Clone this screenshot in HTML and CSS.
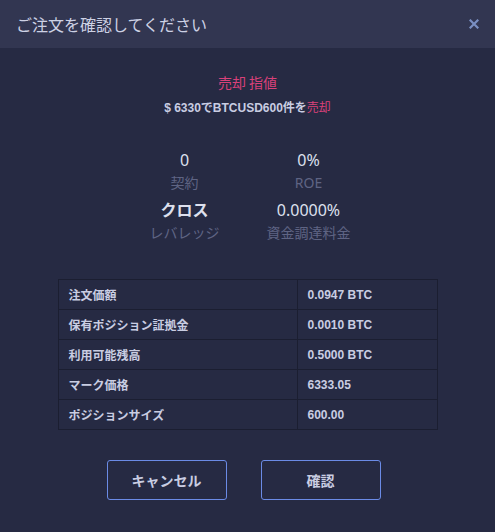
FILE: index.html
```html
<!DOCTYPE html>
<html lang="ja">
<head>
<meta charset="utf-8">
<link rel="stylesheet" href="styles.css">
</head>
<body>
<div class="dialog">
  <div class="header">
    <span class="title">ご注文を確認してください</span>
    <svg class="close" width="10" height="10" viewBox="0 0 10 10"><path d="M1.5 1.5 L8.5 8.5 M8.5 1.5 L1.5 8.5" stroke="#7a8fc2" stroke-width="2.2" stroke-linecap="square"/></svg>
  </div>
  <div class="body">
    <div class="kind">売却 指値</div>
    <div class="summary">$ 6330でBTCUSD600件を<span class="pink">売却</span></div>
    <div class="stats">
      <div class="stat"><div class="val">0</div><div class="lbl">契約</div></div>
      <div class="stat"><div class="val">0%</div><div class="lbl">ROE</div></div>
      <div class="stat"><div class="val">クロス</div><div class="lbl">レバレッジ</div></div>
      <div class="stat"><div class="val">0.0000%</div><div class="lbl">資金調達料金</div></div>
    </div>
    <table class="info">
      <tr><td>注文価額</td><td>0.0947 BTC</td></tr>
      <tr><td>保有ポジション証拠金</td><td>0.0010 BTC</td></tr>
      <tr><td>利用可能残高</td><td>0.5000 BTC</td></tr>
      <tr><td>マーク価格</td><td>6333.05</td></tr>
      <tr><td>ポジションサイズ</td><td>600.00</td></tr>
    </table>
    <div class="buttons">
      <button class="btn">キャンセル</button>
      <button class="btn">確認</button>
    </div>
  </div>
</div>
</body>
</html>
```
FILE: styles.css
```css
html, body {
  margin: 0;
  padding: 0;
  background: #262a43;
}
body {
  font-family: "Liberation Sans", "Noto Sans CJK JP", sans-serif;
  color: #c9cde2;
  width: 495px;
  height: 532px;
  overflow: hidden;
}
.dialog {
  width: 495px;
  height: 532px;
  display: flex;
  flex-direction: column;
}
.header {
  height: 48px;
  background: #323651;
  display: flex;
  align-items: center;
  justify-content: space-between;
  padding: 0 16px 0 16px;
  box-sizing: border-box;
}
.title {
  font-family: "Noto Sans CJK JP", sans-serif;
  font-size: 16px;
  color: #cdd1e4;
}
.close {
  display: block;
  margin-right: 0;
}
.body {
  display: flex;
  flex-direction: column;
  align-items: center;
  padding-top: 24px;
}
.kind {
  font-family: "Noto Sans CJK JP", sans-serif;
  font-size: 14px;
  color: #d9417a;
  line-height: 20px;
}
.summary {
  font-size: 12px;
  font-weight: bold;
  line-height: 18px;
  margin-top: 7px;
  color: #c9cde2;
}
.pink {
  color: #d9417a;
  font-weight: normal;
}
.stats {
  display: grid;
  grid-template-columns: 124px 124px;
  row-gap: 7px;
  margin-top: 33px;
  margin-left: -2px;
}
.stat {
  display: flex;
  flex-direction: column;
  align-items: center;
}
.val {
  font-family: "Noto Sans", "Noto Sans CJK JP", sans-serif;
  font-size: 16px;
  line-height: 20px;
  color: #dde0ee;
}
.stat:nth-child(3) .val {
  font-weight: bold;
}
.lbl {
  font-family: "Noto Sans", "Noto Sans CJK JP", sans-serif;
  font-size: 14px;
  line-height: 20px;
  margin-top: 3px;
  color: #5f6483;
}
.info {
  margin-top: 36px;
  width: 380px;
  border-collapse: collapse;
  font-size: 12px;
  font-weight: bold;
}
.info td {
  border: 1px solid #1b1e31;
  height: 29px;
  padding: 0 10px;
  color: #c9cde2;
}
.info td:first-child {
  width: 218px;
}
.buttons {
  display: flex;
  gap: 34px;
  margin-top: 30px;
  margin-right: 8px;
}
.btn {
  width: 120px;
  height: 40px;
  background: transparent;
  border: 1px solid #6b8be6;
  border-radius: 3px;
  font-family: "Noto Sans CJK JP", sans-serif;
  font-size: 14px;
  font-weight: bold;
  color: #c9cde2;
  cursor: pointer;
}
```
